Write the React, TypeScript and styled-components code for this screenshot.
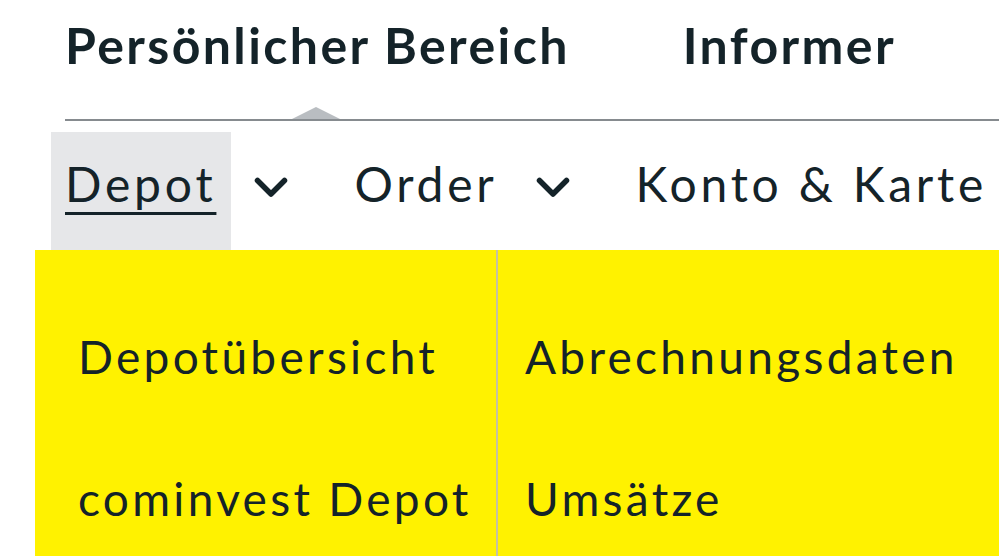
import styled, { createGlobalStyle } from "styled-components";

const GlobalStyle = createGlobalStyle`
  html, body {
    margin: 0;
    padding: 0;
    background: #ffffff;
    overflow: hidden;
  }
  body {
    font-family: Lato, "Noto Sans", sans-serif;
    color: #142329;
  }
`;

const Page = styled.div`
  width: 999px;
  height: 556px;
  overflow: hidden;
`;

const TopTabs = styled.div`
  display: flex;
  gap: 113px;
  height: 107px;
  padding: 20px 0 0 65px;
  box-sizing: border-box;
`;

const TopTab = styled.div`
  font-size: 50px;
  font-weight: 700;
  letter-spacing: 2.4px;
  line-height: 1;
  white-space: nowrap;
`;

const Divider = styled.div`
  position: relative;
  margin-left: 65px;
  height: 12px;
  border-bottom: 2px solid #868b8f;
`;

const Pointer = styled.span<{ $left: number }>`
  position: absolute;
  bottom: 0;
  left: ${({ $left }) => $left}px;
  width: 0;
  height: 0;
  border-left: 24px solid transparent;
  border-right: 24px solid transparent;
  border-bottom: 12px solid #b9bdc1;
`;

const SubNav = styled.nav`
  display: flex;
  margin-top: 11px;
  margin-left: 51px;
  height: 118px;
`;

const NavItem = styled.div`
  display: flex;
  align-items: center;
  margin-right: 52px;
  white-space: nowrap;
`;

const NavLink = styled.a<{ $active?: boolean }>`
  display: flex;
  align-items: center;
  height: 100%;
  box-sizing: border-box;
  padding: 0 15px 15px 14px;
  font-size: 48px;
  letter-spacing: 3.8px;
  line-height: 1;
  color: #142329;
  text-decoration: ${({ $active }) => ($active ? "underline" : "none")};
  text-decoration-thickness: 3px;
  text-underline-offset: 10px;
  background: ${({ $active }) => ($active ? "#e6e7e9" : "transparent")};
`;

const Chevron = styled.svg`
  width: 34px;
  height: 21px;
  margin: 0 0 8px 23px;
  flex-shrink: 0;
`;

const Flyout = styled.div`
  display: grid;
  grid-template-columns: 461px 2px 1fr;
  margin-left: 35px;
  height: 306px;
  background: #fff200;
`;

const Column = styled.ul<{ $pad: number }>`
  list-style: none;
  margin: 0;
  padding: 84px 0 0 ${({ $pad }) => $pad}px;
  display: flex;
  flex-direction: column;
  gap: 96px;
`;

const Separator = styled.div`
  background: #c5c1a3;
`;

const MenuLink = styled.li`
  font-size: 46px;
  letter-spacing: 3.3px;
  line-height: 46px;
  white-space: nowrap;
`;

const ChevronDown = () => (
  <Chevron viewBox="0 0 34 21" fill="none">
    <path
      d="M3.5 3.5l13.5 13.5l13.5-13.5"
      stroke="#142329"
      strokeWidth="5.5"
      strokeLinecap="round"
      strokeLinejoin="round"
    />
  </Chevron>
);

const App = () => (
  <Page>
    <GlobalStyle />
    <TopTabs>
      <TopTab>Persönlicher Bereich</TopTab>
      <TopTab>Informer</TopTab>
    </TopTabs>
    <Divider>
      <Pointer $left={227} />
    </Divider>
    <SubNav>
      <NavItem>
        <NavLink $active>Depot</NavLink>
        <ChevronDown />
      </NavItem>
      <NavItem>
        <NavLink>Order</NavLink>
        <ChevronDown />
      </NavItem>
      <NavItem>
        <NavLink>Konto &amp; Karte</NavLink>
      </NavItem>
    </SubNav>
    <Flyout>
      <Column $pad={43}>
        <MenuLink>Depotübersicht</MenuLink>
        <MenuLink>cominvest Depot</MenuLink>
      </Column>
      <Separator />
      <Column $pad={27}>
        <MenuLink>Abrechnungsdaten</MenuLink>
        <MenuLink>Umsätze</MenuLink>
      </Column>
    </Flyout>
  </Page>
);

export default App;
